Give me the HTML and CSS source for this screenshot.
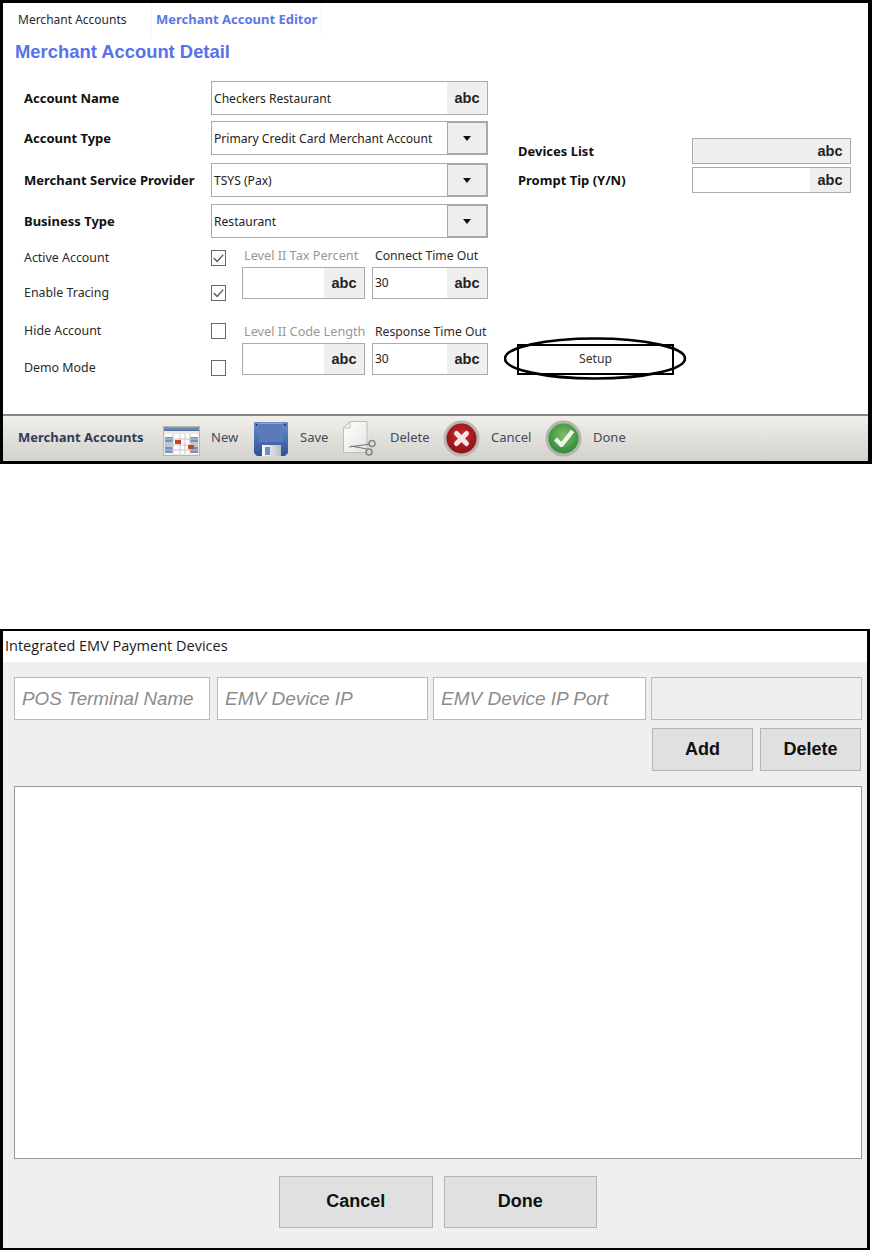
FILE: index.html
```html
<!DOCTYPE html>
<html lang="en">
<head>
<meta charset="utf-8">
<title>Merchant Account Detail</title>
<link rel="stylesheet" href="styles.css">
</head>
<body>
<section class="editor">
  <nav class="tabs">
    <span class="tab">Merchant Accounts</span>
    <span class="tab tab-active">Merchant Account Editor</span>
  </nav>
  <h1 class="title">Merchant Account Detail</h1>
  <div class="form">
    <div class="form-left">
      <div class="row row-a"><span class="label strong">Account Name</span><div class="field wide"><span class="value">Checkers Restaurant</span><span class="abc">abc</span></div></div>
      <div class="row row-b"><span class="label strong">Account Type</span><div class="field wide"><span class="value">Primary Credit Card Merchant Account</span><span class="drop"><i></i></span></div></div>
      <div class="row row-c"><span class="label strong">Merchant Service Provider</span><div class="field wide"><span class="value">TSYS (Pax)</span><span class="drop"><i></i></span></div></div>
      <div class="row row-d"><span class="label strong">Business Type</span><div class="field wide"><span class="value">Restaurant</span><span class="drop"><i></i></span></div></div>
      <div class="lower">
        <div class="checks">
          <div class="check-row c1"><span class="label">Active Account</span><span class="box"><svg viewBox="0 0 15 15" width="13" height="13"><path d="M2 7l4 4 7-8" fill="none" stroke="#555" stroke-width="1.5"/></svg></span></div>
          <div class="check-row c2"><span class="label">Enable Tracing</span><span class="box"><svg viewBox="0 0 15 15" width="13" height="13"><path d="M2 7l4 4 7-8" fill="none" stroke="#555" stroke-width="1.5"/></svg></span></div>
          <div class="check-row c3"><span class="label">Hide Account</span><span class="box"></span></div>
          <div class="check-row c4"><span class="label">Demo Mode</span><span class="box"></span></div>
        </div>
        <div class="small-grid">
          <div class="small s1"><span class="cap muted">Level II Tax Percent</span><div class="field"><span class="value"></span><span class="abc">abc</span></div></div>
          <div class="small s2"><span class="cap">Connect Time Out</span><div class="field"><span class="value num">30</span><span class="abc">abc</span></div></div>
          <div class="small s1"><span class="cap muted">Level II Code Length</span><div class="field"><span class="value"></span><span class="abc">abc</span></div></div>
          <div class="small s2"><span class="cap">Response Time Out</span><div class="field"><span class="value num">30</span><span class="abc">abc</span></div></div>
        </div>
      </div>
    </div>
    <div class="form-right">
      <div class="side-row"><span class="label strong">Devices List</span><div class="field side disabled"><span class="value"></span><span class="abc">abc</span></div></div>
      <div class="side-row"><span class="label strong">Prompt Tip (Y/N)</span><div class="field side"><span class="value"></span><span class="abc">abc</span></div></div>
      <div class="setup">
        Setup
        <svg class="ring" width="184" height="45" viewBox="0 0 184 45"><ellipse cx="91" cy="21.5" rx="90" ry="20" fill="none" stroke="#000" stroke-width="2.6"/></svg>
      </div>
    </div>
  </div>
  <footer class="toolbar">
    <span class="tool-title">Merchant Accounts</span>
    <svg class="ico i-new" width="37" height="30" viewBox="0 0 37 30">
      <defs><linearGradient id="cal" x1="0" y1="0" x2="0" y2="1"><stop offset="0" stop-color="#7f9bc9"/><stop offset="1" stop-color="#4f6f9f"/></linearGradient></defs>
      <rect x=".5" y=".5" width="36" height="29" fill="#ece9e2" stroke="#b9b6ae"/>
      <rect x="1" y="1" width="35" height="4" fill="url(#cal)"/>
      <rect x="2" y="8" width="33" height="20" fill="#fff"/>
      <path d="M2 11h8v5H2zM2 21h8v6H2zM27 11h8v5h-8zM27 21h8v6h-8z" fill="#7392c0"/>
      <path d="M2 16h8v5H2zM27 16h8v5h-8z" fill="#b9c8dd"/>
      <path d="M10 8v20M17 8v20M22 8v20M27 8v20M2 13h33M2 19h33M2 24h33" stroke="#c6c6c6" stroke-width="1" fill="none"/>
      <rect x="12" y="14" width="6" height="4" fill="#d2401c"/>
      <rect x="25" y="19" width="6" height="4" fill="#d2401c"/>
    </svg>
    <span class="tool-text t-new">New</span>
    <svg class="ico i-save" width="34" height="34" viewBox="0 0 34 34">
      <defs><linearGradient id="fl" x1="0" y1="0" x2="0" y2="1"><stop offset="0" stop-color="#6a8cc8"/><stop offset="1" stop-color="#2f5298"/></linearGradient>
      <linearGradient id="fl2" x1="0" y1="0" x2="1" y2="0"><stop offset="0" stop-color="#fff"/><stop offset="1" stop-color="#b8bcc4"/></linearGradient></defs>
      <path d="M1 0h32a1 1 0 0 1 1 1v30l-3 3H3l-3-3V1a1 1 0 0 1 1-1z" fill="url(#fl)"/>
      <rect x="5" y="1" width="24" height="19" fill="#5a7bb8"/>
      <path d="M5 1h24v1H5z" fill="#8aa6d6"/>
      <rect x="8" y="23" width="19" height="11" fill="url(#fl2)"/>
      <rect x="11" y="25" width="5" height="8" fill="#6d8fc4"/>
      <circle cx="2.5" cy="3" r="1" fill="#1d2f5c"/><circle cx="31" cy="3" r="1" fill="#1d2f5c"/>
    </svg>
    <span class="tool-text t-save">Save</span>
    <svg class="ico i-del" width="34" height="36" viewBox="0 0 34 36">
      <defs><linearGradient id="pg" x1="0" y1="0" x2="1" y2="1"><stop offset="0" stop-color="#fff"/><stop offset="1" stop-color="#e4e4e2"/></linearGradient></defs>
      <path d="M7 .5h17v31H.5V7z" fill="url(#pg)" stroke="#bdbdba"/>
      <path d="M7 .5V7H.5z" fill="#f1f1ef" stroke="#bdbdba"/>
      <path d="M6 26l21-3M8 25l16 3" stroke="#777" stroke-width="1.2" fill="none"/>
      <circle cx="29" cy="22.5" r="3" fill="none" stroke="#888" stroke-width="1.6"/>
      <circle cx="26" cy="31" r="3" fill="none" stroke="#888" stroke-width="1.6"/>
    </svg>
    <span class="tool-text t-del">Delete</span>
    <svg class="ico i-cancel" width="37" height="37" viewBox="0 0 37 37">
      <defs><radialGradient id="rd" cx=".5" cy=".4" r=".6"><stop offset="0" stop-color="#cf2a30"/><stop offset="1" stop-color="#8e1116"/></radialGradient></defs>
      <circle cx="18.5" cy="18.5" r="18" fill="#b9b7b0"/>
      <circle cx="18.5" cy="18.5" r="15" fill="url(#rd)"/>
      <path d="M13.5 13.5l10 10M23.5 13.5l-10 10" stroke="#f4e6e6" stroke-width="5" stroke-linecap="round"/>
    </svg>
    <span class="tool-text t-cancel">Cancel</span>
    <svg class="ico i-done" width="37" height="37" viewBox="0 0 37 37">
      <defs><radialGradient id="gr" cx=".5" cy=".4" r=".6"><stop offset="0" stop-color="#7cc06a"/><stop offset="1" stop-color="#2f8a3a"/></radialGradient></defs>
      <circle cx="18.5" cy="18.5" r="18" fill="#b4b6ae"/>
      <circle cx="18.5" cy="18.5" r="15" fill="url(#gr)"/>
      <path d="M10.5 19l6 6 11-14" fill="none" stroke="#f4f6ee" stroke-width="4.4" stroke-linejoin="round"/>
    </svg>
    <span class="tool-text t-done">Done</span>
  </footer>
</section>

<section class="devices">
  <header class="dialog-title">Integrated EMV Payment Devices</header>
  <div class="dialog-body">
    <div class="inputs">
      <div class="ph p1">POS Terminal Name</div>
      <div class="ph p2">EMV Device IP</div>
      <div class="ph p3">EMV Device IP Port</div>
      <div class="ph p4 blank"></div>
    </div>
    <div class="actions">
      <button class="btn small-btn">Add</button>
      <button class="btn small-btn">Delete</button>
    </div>
    <div class="listbox"></div>
    <div class="footer-actions">
      <button class="btn big-btn">Cancel</button>
      <button class="btn big-btn">Done</button>
    </div>
  </div>
</section>
</body>
</html>
```
FILE: styles.css
```css
* { box-sizing: border-box; }
html, body { margin: 0; padding: 0; background: #fff; }
body { width: 874px; height: 1251px; overflow: hidden; font-family: "Noto Sans", "DejaVu Sans", sans-serif; color: #222; }

.editor { width: 872px; height: 464px; border: 3px solid #000; border-right-width: 4px; display: flex; flex-direction: column; background: #fff; }
.tabs { height: 33px; display: flex; flex: none; }
.tab { font-size: 12px; line-height: 34px; padding: 0 0 0 15px; width: 148px; color: #2a2a2a; }
.tab-active { width: 171px; padding-left: 4px; font-size: 13px; line-height: 32px; font-weight: 700; color: #5c78e6; border-left: 1px solid #f5f5f5; border-right: 1px solid #f5f5f5; }
.title { margin: 5px 0 0 12px; font: 700 18.4px/22px "Liberation Sans", Arial, sans-serif; color: #5672ea; height: 22px; flex: none; }

.form { flex: 1; display: flex; padding: 18px 0 0 21px; min-height: 0; }
.form-left { width: 461px; flex: none; }
.row { display: flex; align-items: center; height: 34px; }
.row-b { margin-top: 6px; }
.row-c { margin-top: 8px; }
.row-d { margin-top: 7px; }
.label { font-size: 12.4px; color: #2a2a2a; }
.strong { font-size: 13px; font-weight: 700; color: #111; }
.row .label { width: 187px; flex: none; }

.field { display: flex; height: 32px; border: 1px solid #aaa; background: #fff; flex: none; }
.wide { width: 277px; height: 34px; }
.value { flex: 1; font-size: 12.1px; line-height: 30px; padding-left: 2px; color: #222; white-space: nowrap; overflow: hidden; }
.wide .value { line-height: 33px; }
.num { font-size: 12px; }
.abc { width: 40px; flex: none; background: #efefef; font: 700 14.5px/30px "Liberation Sans", Arial, sans-serif; color: #222; text-align: center; }
.wide .abc { line-height: 32px; }
.drop { width: 41px; flex: none; background: #efefef; border: 2px solid #a8a8a8; border-width: 2px 2px 2px 1px; margin: -1px -1px -1px 0; display: flex; align-items: center; justify-content: center; }
.drop i { width: 0; height: 0; border: 4.5px solid transparent; border-top: 5px solid #111; border-bottom: 0; }

.lower { display: flex; margin-top: 11px; }
.checks { width: 218px; flex: none; }
.check-row { display: flex; align-items: center; height: 18px; }
.check-row .label { width: 187px; flex: none; padding-bottom: 2px; }
.c2 { margin-top: 17px; }
.c3 { margin-top: 20px; }
.c4 { margin-top: 19px; }
.box { width: 15px; height: 16px; border: 1px solid #6a6a6a; background: #fff; display: flex; align-items: center; justify-content: center; }

.small-grid { display: grid; grid-template-columns: 123px 116px; column-gap: 7px; row-gap: 24px; align-content: start; margin-top: -2px; }
.small { display: flex; flex-direction: column; }
.cap { font-size: 12.2px; line-height: 17px; height: 20px; white-space: nowrap; color: #2a2a2a; padding-left: 2px; }
.s2 .cap { padding-left: 3px; }
.muted { color: #979797; font-size: 12.7px; }
.small .field { width: 100%; }

.form-right { padding: 57px 0 0 33px; flex: none; width: 345px; }
.side-row { display: flex; align-items: center; height: 26px; margin-bottom: 3px; }
.side-row .label { width: 174px; flex: none; }
.side { width: 159px; height: 26px; }
.side .value { line-height: 24px; }
.side .abc { line-height: 24px; }
.disabled { background: #efefef; }
.setup { position: relative; margin: 151px 0 0 -1px; width: 157px; height: 31px; border: 2px solid #000; font-size: 12.2px; line-height: 25px; text-align: center; color: #333; }
.ring { position: absolute; left: -15px; top: -9px; }

.toolbar { height: 47px; flex: none; border-top: 2px solid #8a8986; background: linear-gradient(#f1efea, #d3d1cc); display: flex; align-items: center; padding-left: 15px; }
.tool-title { font-size: 13px; font-weight: 700; color: #2f3d5a; width: 145px; flex: none; margin-bottom: 3px; }
.tool-text { font-size: 13px; color: #3f4a60; flex: none; margin-bottom: 3px; }
.ico { flex: none; }
.i-new { margin-top: 4px; }
.t-new { margin-left: 11px; width: 43px; }
.i-save { margin-top: 1px; }
.t-save { margin-left: 12px; width: 43px; }
.t-del { margin-left: 13px; width: 53px; }
.t-cancel { margin-left: 11px; width: 54px; }
.t-done { margin-left: 11px; }

.devices { width: 870px; height: 621px; margin-top: 165px; border: 2px solid #000; border-left-width: 3px; border-right-width: 3px; display: flex; flex-direction: column; background: #efefef; }
.dialog-title { height: 31px; flex: none; background: #fff; font: 14.5px/29px "Open Sans", "Noto Sans", sans-serif; color: #1b1b1b; padding-left: 2px; }
.dialog-body { flex: 1; padding: 15px 0 0 11px; }
.inputs { display: flex; height: 43px; }
.ph { height: 43px; border: 1px solid #b9b9b9; background: #fff; font: italic 19px/41px "Liberation Sans", Arial, sans-serif; color: #8c8c8c; padding-left: 7px; flex: none; }
.p1 { width: 196px; font-size: 18.8px; }
.p2 { width: 211px; margin-left: 7px; }
.p3 { width: 213px; margin-left: 5px; }
.p4 { width: 211px; margin-left: 5px; }
.blank { background: #efefef; }
.actions { display: flex; justify-content: flex-end; gap: 7px; height: 43px; margin-top: 8px; padding-right: 1px; width: 848px; }
.btn { border: 1px solid #b4b4b4; background: #e0e0e0; font: 700 18px "Liberation Sans", Arial, sans-serif; color: #111; padding: 0; }
.small-btn { width: 101px; height: 43px; }
.listbox { width: 848px; height: 373px; margin-top: 15px; background: #fff; border: 1px solid #8f9a9f; }
.footer-actions { display: flex; gap: 11px; margin-top: 17px; margin-left: 265px; }
.big-btn { width: 153.5px; height: 52px; padding-bottom: 2px; }
```
